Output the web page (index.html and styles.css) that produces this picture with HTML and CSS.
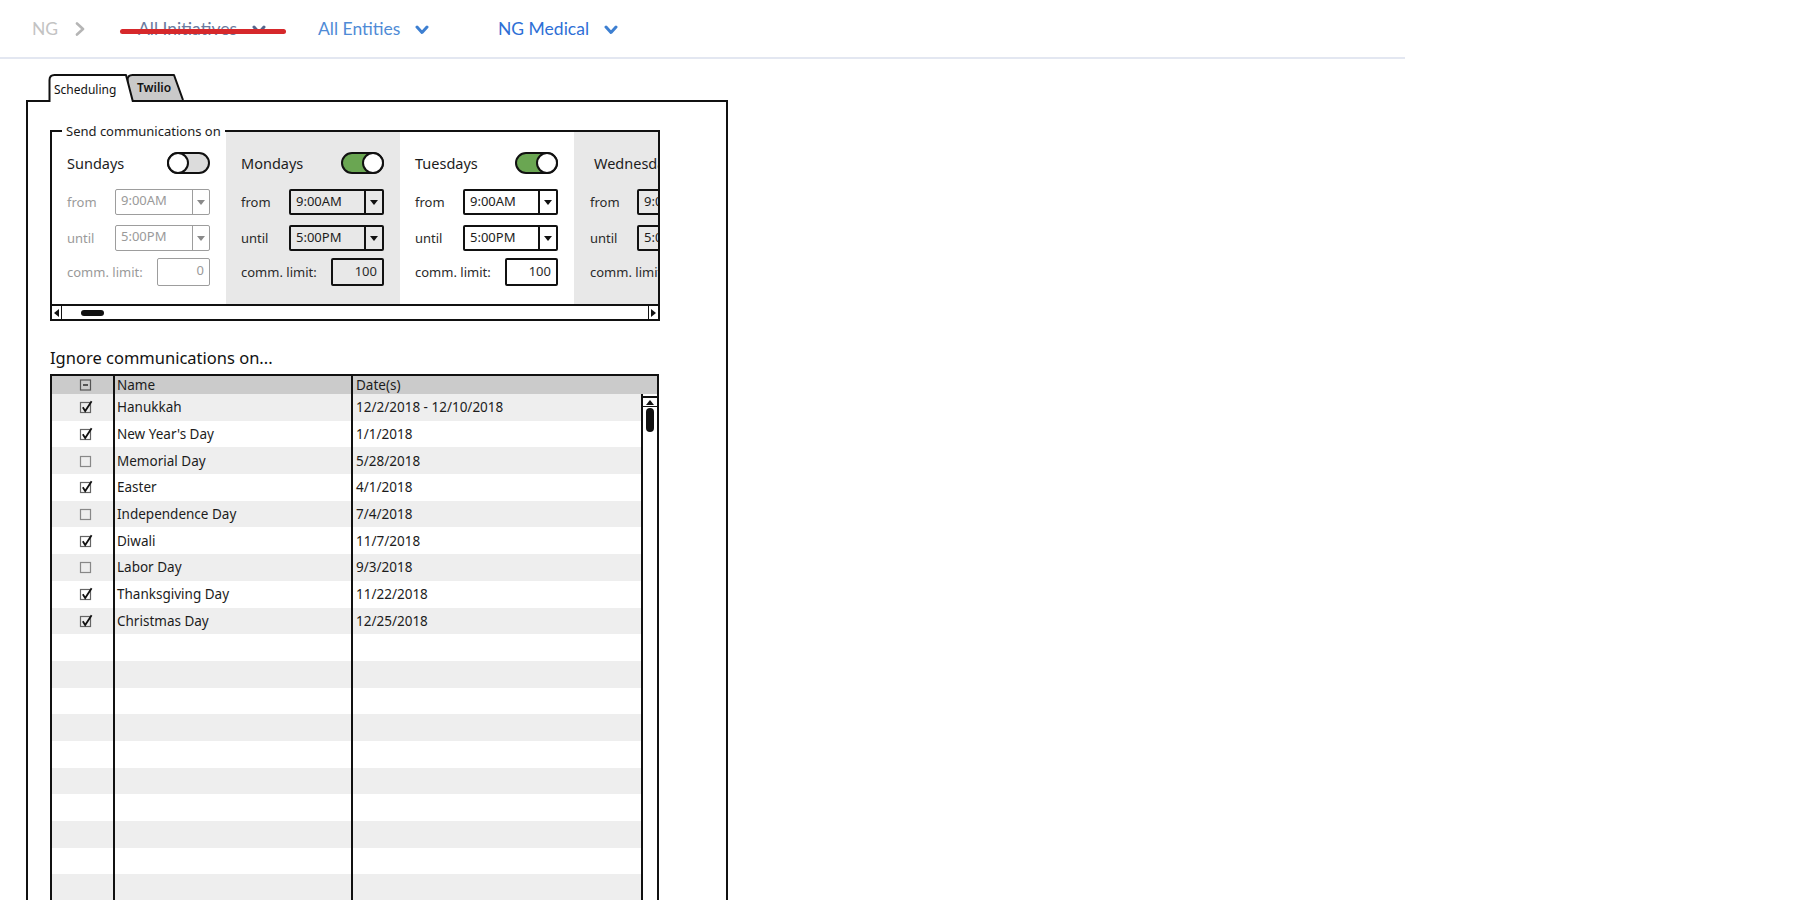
FILE: index.html
```html
<!DOCTYPE html>
<html lang="en">
<head>
<meta charset="utf-8">
<title>Scheduling</title>
<link rel="stylesheet" href="styles.css">
</head>
<body>
<header class="topbar">
  <span class="crumb-root">NG</span>
  <svg class="crumb-sep" width="10" height="14" viewBox="0 0 10 14"><path d="M2 1.5 L8 7 L2 12.5" fill="none" stroke="#b5b5b5" stroke-width="2.6" stroke-linecap="round" stroke-linejoin="round"/></svg>
  <span class="dd dd-struck">
    <span class="dd-label">All Initiatives</span>
    <svg class="chev" width="14" height="10" viewBox="0 0 14 10"><path d="M2 2 L7 7.5 L12 2" fill="none" stroke="#56658c" stroke-width="3" stroke-linecap="round" stroke-linejoin="round"/></svg>
    <span class="strike"></span>
  </span>
  <span class="dd dd-ent">
    <span class="dd-label">All Entities</span>
    <svg class="chev" width="14" height="10" viewBox="0 0 14 10"><path d="M2 2 L7 7.5 L12 2" fill="none" stroke="#3d7fd1" stroke-width="3" stroke-linecap="round" stroke-linejoin="round"/></svg>
  </span>
  <span class="dd dd-med">
    <span class="dd-label">NG Medical</span>
    <svg class="chev" width="14" height="10" viewBox="0 0 14 10"><path d="M2 2 L7 7.5 L12 2" fill="none" stroke="#3d7fd1" stroke-width="3" stroke-linecap="round" stroke-linejoin="round"/></svg>
  </span>
</header>

<main class="page">
  <div class="tabset">
    <div class="tabs">
      <div class="tab tab-on">
        <svg class="tab-shape" width="86" height="28" viewBox="0 0 86 28"><path d="M1.5 28 V6 Q1.5 1 6.5 1 H78 L85 28" fill="#fff" stroke="#111" stroke-width="2" stroke-linejoin="round"/></svg>
        <span class="tab-text">Scheduling</span>
      </div>
      <div class="tab tab-off">
        <svg class="tab-shape" width="58" height="26" viewBox="0 0 58 26"><path d="M1.5 26 V6 Q1.5 1 6.5 1 H48 L57 26" fill="#c9c9c9" stroke="#111" stroke-width="2" stroke-linejoin="round"/></svg>
        <span class="tab-text">Twilio</span>
      </div>
    </div>

    <section class="panel">
      <div class="daysbox">
        <span class="legend">Send communications on</span>
        <div class="days">
          <div class="day day-disabled">
            <div class="day-head"><span class="day-name">Sundays</span><span class="toggle"><span class="knob"></span></span></div>
            <div class="field"><span class="lbl">from</span><span class="select"><span class="val">9:00AM</span><span class="arrow"><span class="tri"></span></span></span></div>
            <div class="field"><span class="lbl">until</span><span class="select"><span class="val">5:00PM</span><span class="arrow"><span class="tri"></span></span></span></div>
            <div class="field field-limit"><span class="lbl">comm. limit:</span><span class="limit">0</span></div>
          </div>
          <div class="day day-shaded">
            <div class="day-head"><span class="day-name">Mondays</span><span class="toggle toggle-on"><span class="knob"></span></span></div>
            <div class="field"><span class="lbl">from</span><span class="select"><span class="val">9:00AM</span><span class="arrow"><span class="tri"></span></span></span></div>
            <div class="field"><span class="lbl">until</span><span class="select"><span class="val">5:00PM</span><span class="arrow"><span class="tri"></span></span></span></div>
            <div class="field field-limit"><span class="lbl">comm. limit:</span><span class="limit">100</span></div>
          </div>
          <div class="day">
            <div class="day-head"><span class="day-name">Tuesdays</span><span class="toggle toggle-on"><span class="knob"></span></span></div>
            <div class="field"><span class="lbl">from</span><span class="select"><span class="val">9:00AM</span><span class="arrow"><span class="tri"></span></span></span></div>
            <div class="field"><span class="lbl">until</span><span class="select"><span class="val">5:00PM</span><span class="arrow"><span class="tri"></span></span></span></div>
            <div class="field field-limit"><span class="lbl">comm. limit:</span><span class="limit">100</span></div>
          </div>
          <div class="day day-shaded day-partial">
            <div class="day-head"><span class="day-name">Wednesdays</span></div>
            <div class="field"><span class="lbl">from</span><span class="select"><span class="val">9:00AM</span><span class="arrow"><span class="tri"></span></span></span></div>
            <div class="field"><span class="lbl">until</span><span class="select"><span class="val">5:00PM</span><span class="arrow"><span class="tri"></span></span></span></div>
            <div class="field field-limit"><span class="lbl">comm. limit:</span><span class="limit">100</span></div>
          </div>
        </div>
        <div class="hscroll">
          <span class="hs-btn hs-left"><span class="tri-left"></span></span>
          <span class="hs-thumb"></span>
          <span class="hs-fill"></span>
          <span class="hs-btn hs-right"><span class="tri-right"></span></span>
        </div>
      </div>

      <h2 class="ignore-title">Ignore communications on...</h2>

      <div class="holidays">
        <div class="thead">
          <span class="cell c-chk"><svg class="cb" width="14" height="14" viewBox="0 0 14 14"><rect x="1.5" y="2" width="10" height="10" fill="none" stroke="#555" stroke-width="1.2"/><path d="M4 7 H9" stroke="#222" stroke-width="1.4"/></svg></span>
          <span class="cell c-name">Name</span>
          <span class="cell c-date">Date(s)</span>
        </div>
        <div class="tbody">
          <div class="rows">
            <div class="row"><span class="cell c-chk"><svg class="cb" width="14" height="14" viewBox="0 0 14 14"><rect x="1.5" y="2.5" width="10" height="10" fill="none" stroke="#666" stroke-width="1.2"/><path d="M3.8 7.2 L6.2 11 L12.6 1.2" fill="none" stroke="#111" stroke-width="1.8"/></svg></span><span class="cell c-name">Hanukkah</span><span class="cell c-date">12/2/2018 - 12/10/2018</span></div>
            <div class="row"><span class="cell c-chk"><svg class="cb" width="14" height="14" viewBox="0 0 14 14"><rect x="1.5" y="2.5" width="10" height="10" fill="none" stroke="#666" stroke-width="1.2"/><path d="M3.8 7.2 L6.2 11 L12.6 1.2" fill="none" stroke="#111" stroke-width="1.8"/></svg></span><span class="cell c-name">New Year's Day</span><span class="cell c-date">1/1/2018</span></div>
            <div class="row"><span class="cell c-chk"><svg class="cb" width="14" height="14" viewBox="0 0 14 14"><rect x="1.5" y="2.5" width="10" height="10" fill="none" stroke="#888" stroke-width="1.2"/></svg></span><span class="cell c-name">Memorial Day</span><span class="cell c-date">5/28/2018</span></div>
            <div class="row"><span class="cell c-chk"><svg class="cb" width="14" height="14" viewBox="0 0 14 14"><rect x="1.5" y="2.5" width="10" height="10" fill="none" stroke="#666" stroke-width="1.2"/><path d="M3.8 7.2 L6.2 11 L12.6 1.2" fill="none" stroke="#111" stroke-width="1.8"/></svg></span><span class="cell c-name">Easter</span><span class="cell c-date">4/1/2018</span></div>
            <div class="row"><span class="cell c-chk"><svg class="cb" width="14" height="14" viewBox="0 0 14 14"><rect x="1.5" y="2.5" width="10" height="10" fill="none" stroke="#888" stroke-width="1.2"/></svg></span><span class="cell c-name">Independence Day</span><span class="cell c-date">7/4/2018</span></div>
            <div class="row"><span class="cell c-chk"><svg class="cb" width="14" height="14" viewBox="0 0 14 14"><rect x="1.5" y="2.5" width="10" height="10" fill="none" stroke="#666" stroke-width="1.2"/><path d="M3.8 7.2 L6.2 11 L12.6 1.2" fill="none" stroke="#111" stroke-width="1.8"/></svg></span><span class="cell c-name">Diwali</span><span class="cell c-date">11/7/2018</span></div>
            <div class="row"><span class="cell c-chk"><svg class="cb" width="14" height="14" viewBox="0 0 14 14"><rect x="1.5" y="2.5" width="10" height="10" fill="none" stroke="#888" stroke-width="1.2"/></svg></span><span class="cell c-name">Labor Day</span><span class="cell c-date">9/3/2018</span></div>
            <div class="row"><span class="cell c-chk"><svg class="cb" width="14" height="14" viewBox="0 0 14 14"><rect x="1.5" y="2.5" width="10" height="10" fill="none" stroke="#666" stroke-width="1.2"/><path d="M3.8 7.2 L6.2 11 L12.6 1.2" fill="none" stroke="#111" stroke-width="1.8"/></svg></span><span class="cell c-name">Thanksgiving Day</span><span class="cell c-date">11/22/2018</span></div>
            <div class="row"><span class="cell c-chk"><svg class="cb" width="14" height="14" viewBox="0 0 14 14"><rect x="1.5" y="2.5" width="10" height="10" fill="none" stroke="#666" stroke-width="1.2"/><path d="M3.8 7.2 L6.2 11 L12.6 1.2" fill="none" stroke="#111" stroke-width="1.8"/></svg></span><span class="cell c-name">Christmas Day</span><span class="cell c-date">12/25/2018</span></div>
            <div class="row"><span class="cell c-chk"></span><span class="cell c-name"></span><span class="cell c-date"></span></div>
            <div class="row"><span class="cell c-chk"></span><span class="cell c-name"></span><span class="cell c-date"></span></div>
            <div class="row"><span class="cell c-chk"></span><span class="cell c-name"></span><span class="cell c-date"></span></div>
            <div class="row"><span class="cell c-chk"></span><span class="cell c-name"></span><span class="cell c-date"></span></div>
            <div class="row"><span class="cell c-chk"></span><span class="cell c-name"></span><span class="cell c-date"></span></div>
            <div class="row"><span class="cell c-chk"></span><span class="cell c-name"></span><span class="cell c-date"></span></div>
            <div class="row"><span class="cell c-chk"></span><span class="cell c-name"></span><span class="cell c-date"></span></div>
            <div class="row"><span class="cell c-chk"></span><span class="cell c-name"></span><span class="cell c-date"></span></div>
            <div class="row"><span class="cell c-chk"></span><span class="cell c-name"></span><span class="cell c-date"></span></div>
            <div class="row"><span class="cell c-chk"></span><span class="cell c-name"></span><span class="cell c-date"></span></div>
            <div class="row"><span class="cell c-chk"></span><span class="cell c-name"></span><span class="cell c-date"></span></div>
            <div class="row"><span class="cell c-chk"></span><span class="cell c-name"></span><span class="cell c-date"></span></div>
          </div>
          <div class="vscroll">
            <span class="vs-up"><span class="tri-up"></span></span>
            <span class="vs-thumb"></span>
          </div>
        </div>
      </div>
    </section>
  </div>
</main>
</body>
</html>
```

FILE: styles.css
```css
html, body {
  margin: 0;
  padding: 0;
  height: 900px;
  overflow: hidden;
  background: #fff;
}

body {
  font-family: "Noto Sans", "DejaVu Sans", sans-serif;
  color: #1c1c1c;
}

/* ---------- top bar ---------- */
.topbar {
  display: flex;
  align-items: center;
  width: 1405px;
  height: 59px;
  padding-left: 32px;
  box-sizing: border-box;
  border-bottom: 2px solid #e3e7f1;
  font-family: Lato, "Noto Sans", sans-serif;
  font-size: 17.5px;
}

.crumb-root {
  color: #c3c3c3;
  width: 25px;
}

.crumb-sep {
  margin-left: 18px;
  margin-right: 53px;
}

.dd {
  position: relative;
  display: flex;
  align-items: center;
  width: 180px;
}

.dd .chev {
  margin-left: 15px;
  margin-top: 2px;
}

.dd-struck .dd-label { color: #6b7ba0; }
.dd-ent .dd-label { color: #4f8bd6; }
.dd-med .dd-label { color: #2e6fd6; }

.strike {
  position: absolute;
  left: -18px;
  top: 50%;
  width: 166px;
  height: 5px;
  border-radius: 3px;
  background: #d6282b;
}

/* ---------- tabs + panel ---------- */
.page {
  padding-left: 26px;
}

.tabset {
  margin-top: 15px;
  width: 702px;
}

.tabs {
  position: relative;
  z-index: 1;
  display: flex;
  align-items: flex-start;
  height: 26px;
  padding-left: 22px;
  font-size: 12px;
}

.tab {
  position: relative;
  display: flex;
  align-items: center;
  box-sizing: border-box;
}

.tab-shape {
  position: absolute;
  left: 0;
  top: 0;
}

.tab-text {
  position: relative;
}

.tab-on {
  z-index: 2;
  width: 86px;
  height: 28px;
  padding-left: 6px;
  padding-top: 3px;
  color: #111;
}

.tab-off {
  z-index: 1;
  width: 58px;
  height: 26px;
  margin-left: -8px;
  padding-left: 11px;
  color: #111;
  font-weight: 600;
}

.panel {
  box-sizing: border-box;
  width: 702px;
  height: 820px;
  border: 2px solid #111;
  padding: 28px 22px 0;
}

/* ---------- days box ---------- */
.daysbox {
  position: relative;
  width: 610px;
  box-sizing: border-box;
  border: 2px solid #111;
}

.legend {
  position: absolute;
  left: 10px;
  top: -9px;
  padding: 0 4px;
  background: #fff;
  font-size: 13px;
  line-height: 16px;
  z-index: 1;
}

.days {
  display: flex;
  height: 172px;
  overflow: hidden;
}

.day {
  flex: 0 0 174px;
  box-sizing: border-box;
  padding: 20px 16px 0 15px;
  display: flex;
  flex-direction: column;
  font-size: 13px;
  color: #2a2a2a;
}

.day-shaded { background: #e8e8e8; }

.day-partial {
  padding-left: 16px;
}

.day-head {
  display: flex;
  align-items: center;
  justify-content: space-between;
  height: 22px;
}

.day-name {
  font-size: 14.5px;
  color: #1c1c1c;
  white-space: nowrap;
}

.day-partial .day-name { padding-left: 4px; }

.toggle {
  display: flex;
  justify-content: flex-start;
  width: 43px;
  height: 22px;
  box-sizing: border-box;
  border: 2px solid #111;
  border-radius: 12px;
  background: #dcdcdc;
}

.toggle-on {
  justify-content: flex-end;
  background: #6aa652;
}

.knob {
  width: 22px;
  height: 22px;
  margin: -2px;
  box-sizing: border-box;
  border: 2px solid #111;
  border-radius: 50%;
  background: #fff;
}

.field {
  display: flex;
  align-items: center;
  justify-content: space-between;
  margin-top: 15px;
  height: 26px;
  white-space: nowrap;
}

.field + .field { margin-top: 10px; }

.field.field-limit {
  margin-top: 7px;
  height: 28px;
}

.lbl { color: #2a2a2a; }

.select {
  display: flex;
  flex: 0 0 95px;
  width: 95px;
  height: 26px;
  box-sizing: border-box;
  border: 2px solid #111;
  border-radius: 2px;
}

.val {
  flex: 1;
  padding-left: 5px;
  line-height: 21px;
  color: #1c1c1c;
}

.arrow {
  display: flex;
  align-items: center;
  justify-content: center;
  width: 16px;
  border-left: 2px solid #111;
}

.tri {
  width: 0;
  height: 0;
  border-left: 4px solid transparent;
  border-right: 4px solid transparent;
  border-top: 5px solid #111;
}

.limit {
  flex: 0 0 53px;
  width: 53px;
  height: 28px;
  box-sizing: border-box;
  border: 2px solid #111;
  border-radius: 2px;
  padding-right: 5px;
  text-align: right;
  line-height: 23px;
}

.day-disabled .lbl { color: #9a9a9a; }
.day-disabled .select,
.day-disabled .limit { border-color: #9d9d9d; border-width: 1.5px; }
.day-disabled .arrow { border-left: 1.5px solid #9d9d9d; }
.day-disabled .val,
.day-disabled .limit { color: #9a9a9a; }
.day-disabled .tri { border-top-color: #8a8a8a; }

/* horizontal scroll */
.hscroll {
  display: flex;
  align-items: center;
  height: 15px;
  box-sizing: border-box;
  border-top: 2px solid #111;
}

.hs-btn {
  display: flex;
  align-items: center;
  justify-content: center;
  width: 9px;
  height: 100%;
}

.hs-left { border-right: 1.5px solid #111; }
.hs-right { border-left: 1.5px solid #111; }

.tri-left {
  width: 0;
  height: 0;
  border-top: 4px solid transparent;
  border-bottom: 4px solid transparent;
  border-right: 5px solid #111;
}

.tri-right {
  width: 0;
  height: 0;
  border-top: 4px solid transparent;
  border-bottom: 4px solid transparent;
  border-left: 5px solid #111;
}

.hs-thumb {
  width: 23px;
  height: 6px;
  margin-left: 19px;
  border-radius: 3px;
  background: #111;
}

.hs-fill { flex: 1; }

/* ---------- holidays ---------- */
.ignore-title {
  margin: 27px 0 6px;
  font-size: 16.5px;
  line-height: 20px;
  font-weight: 400;
  color: #111;
}

.holidays {
  width: 609px;
  box-sizing: border-box;
  border: 2px solid #111;
  border-bottom: none;
  font-size: 13.5px;
  color: #1c1c1c;
}

.thead {
  display: grid;
  grid-template-columns: 63px 238px 1fr;
  height: 18px;
  background: #cbcbcb;
}

.cell {
  display: flex;
  align-items: center;
  box-sizing: border-box;
  white-space: nowrap;
  overflow: hidden;
}

.c-chk {
  justify-content: center;
  padding-left: 7px;
  border-right: 2px solid #111;
}

.c-name {
  padding-left: 2px;
  border-right: 2px solid #111;
}

.c-date {
  padding-left: 3px;
}

.tbody {
  display: flex;
}

.rows {
  width: 589px;
}

.row {
  display: grid;
  grid-template-columns: 63px 238px 1fr;
  height: 26.7px;
}

.row:nth-child(odd) { background: #eeeeee; }

.vscroll {
  flex: 1;
  display: flex;
  flex-direction: column;
  align-items: center;
  box-sizing: border-box;
  border-left: 2px solid #111;
  padding-top: 2px;
}

.vs-up {
  display: flex;
  align-items: center;
  justify-content: center;
  width: 100%;
  height: 11px;
  box-sizing: border-box;
  border-top: 2px solid #111;
  border-bottom: 1.5px solid #111;
}

.tri-up {
  width: 0;
  height: 0;
  border-left: 4px solid transparent;
  border-right: 4px solid transparent;
  border-bottom: 5px solid #111;
}

.vs-thumb {
  width: 8px;
  height: 24px;
  margin-top: 1px;
  border-radius: 4px;
  background: #111;
}
```
